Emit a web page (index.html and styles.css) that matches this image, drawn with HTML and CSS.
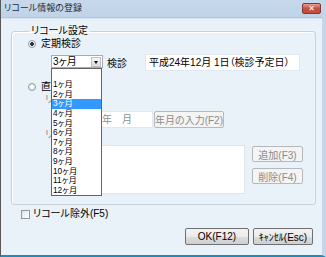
FILE: index.html
```html
<!DOCTYPE html>
<html lang="ja">
<head>
  <meta charset="UTF-8" />
  <title>リコール情報の登録</title>
  <link rel="stylesheet" href="styles.css">
</head>
<body>
  <div class="window">
    <div class="titlebar">
      <span class="title">リコール情報の登録</span>
      <span class="close">✕</span>
    </div>

    <div class="client">
      <fieldset class="group">
        <legend>リコール設定</legend>

        <div class="radio-row">
          <span class="radio checked"></span>
          <span>定期検診</span>
        </div>

        <div class="combo-row">
          <div class="combo">
            <span class="combo-value">3ヶ月</span>
            <span class="combo-btn"></span>
            <ul class="droplist">
              <li class="blank"></li>
              <li>1ヶ月</li>
              <li>2ヶ月</li>
              <li class="selected">3ヶ月</li>
              <li>4ヶ月</li>
              <li>5ヶ月</li>
              <li>6ヶ月</li>
              <li>7ヶ月</li>
              <li>8ヶ月</li>
              <li>9ヶ月</li>
              <li>10ヶ月</li>
              <li>11ヶ月</li>
              <li>12ヶ月</li>
            </ul>
          </div>
          <span class="combo-label">検診</span>
          <div class="textbox date">平成24年12月 1日（検診予定日）</div>
        </div>

        <div class="radio-row second">
          <span class="radio"></span>
          <span>直</span>
        </div>

        <div class="sub-label">リ</div>

        <div class="ym-row">
          <div class="textbox ym">年　月</div>
          <button class="btn" disabled>年月の入力(F2)</button>
        </div>

        <div class="sub-label">リ</div>

        <div class="list-row">
          <div class="listbox"></div>
          <div class="side-buttons">
            <button class="btn" disabled>追加(F3)</button>
            <button class="btn" disabled>削除(F4)</button>
          </div>
        </div>
      </fieldset>

      <div class="check-row">
        <span class="check"></span>
        <span>リコール除外(F5)</span>
      </div>

      <div class="footer">
        <button class="btn main">OK(F12)</button>
        <button class="btn main">ｷｬﾝｾﾙ(Esc)</button>
      </div>
    </div>
  </div>
</body>
</html>
```

FILE: styles.css
```css
* {
  box-sizing: border-box;
}

body {
  margin: 0;
  background: #ffffff;
  font-family: "Liberation Sans", "Noto Sans CJK JP", sans-serif;
  font-size: 10px;
  font-feature-settings: "palt";
  color: #000000;
}

.window {
  width: 326px;
  height: 257px;
  display: flex;
  flex-direction: column;
  background: #c9dbee;
  border-left: 1px solid #585858;
  border-right: 4px solid #c4d6ea;
  border-bottom: 2px solid #1f8bb8;
  box-shadow: inset -1px 0 0 #8fa5bd;
}

.titlebar {
  height: 18px;
  display: flex;
  align-items: center;
  justify-content: space-between;
  padding: 0 0 2px 3px;
  background: linear-gradient(#c7d8ea, #bfd3e8);
  border-bottom: 1px solid #b2c6dc;
}

.title {
  font-size: 9px;
  line-height: 12px;
  color: #1b2a3c;
}

.close {
  width: 19px;
  height: 11px;
  margin-right: 1px;
  margin-top: 1px;
  border: 1px solid #7a3a36;
  border-radius: 2px;
  background: linear-gradient(#e59c8e, #c84a3b 55%, #c0503e);
  color: #ffffff;
  font-size: 8px;
  line-height: 9px;
  text-align: center;
  font-family: "DejaVu Sans", sans-serif;
  font-weight: bold;
}

.client {
  flex: 1;
  background: #e9f1f9;
  padding: 6px 6px 0 10px;
  border-top: 1px solid #d7e3ef;
}

.group {
  width: 305px;
  margin: 0;
  padding: 0 0 10px 16px;
  min-width: 0;
  border: 1px solid #c8d2da;
  border-radius: 3px;
  box-shadow: inset 1px 1px 0 #ffffff;
}

.group legend {
  padding: 0 2px;
  margin-left: 1px;
  line-height: 12px;
}

.radio-row {
  display: flex;
  align-items: center;
  gap: 5px;
  height: 12px;
  margin-top: 1px;
  line-height: 12px;
}

.radio-row.second {
  margin-top: 10px;
}

.radio {
  width: 8px;
  height: 8px;
  border-radius: 50%;
  border: 1px solid #8d98a4;
  background: radial-gradient(#ffffff, #dde3ea);
}

.radio.checked {
  background: radial-gradient(#2b3540 0 1.6px, #ffffff 2.2px);
}

.combo-row {
  display: flex;
  align-items: center;
  height: 17px;
  margin-top: 4px;
}

.combo {
  position: relative;
  width: 52px;
  height: 13px;
  margin-left: 23px;
  margin-top: -2px;
  display: flex;
  align-items: center;
  background: #ffffff;
  border: 1px solid #a5acb5;
}

.combo-value {
  flex: 1;
  padding-left: 1px;
  line-height: 11px;
}

.combo-btn {
  width: 10px;
  height: 10px;
  margin-right: 1px;
  border: 1px solid #b9c0c8;
  background: linear-gradient(#f6f6f6, #dcdcdc);
  position: relative;
}

.combo-btn::after {
  content: "";
  position: absolute;
  left: 2px;
  top: 3px;
  border-left: 2px solid transparent;
  border-right: 2px solid transparent;
  border-top: 3px solid #000000;
}

.droplist {
  position: absolute;
  left: -1px;
  top: 12px;
  width: 51px;
  margin: 0;
  padding: 0;
  list-style: none;
  background: #ffffff;
  border: 1px solid #646464;
  z-index: 5;
}

.droplist li {
  height: 9.6px;
  font-size: 8.3px;
  line-height: 9.6px;
  padding-left: 1px;
}

.droplist li.blank {
  height: 11.3px;
}

.droplist li.selected {
  background: #3399ff;
  color: #ffffff;
}

.combo-label {
  margin-left: 4px;
}

.textbox {
  background: #ffffff;
  border: 1px solid #e1e8ef;
  line-height: 15px;
}

.date {
  width: 155px;
  height: 17px;
  margin-left: 18px;
  padding-left: 3px;
}

.sub-label {
  height: 12px;
  line-height: 12px;
  margin-top: 1px;
  padding-left: 17px;
  color: #8a8f95;
}

.sub-label + .list-row {
  margin-top: 4px;
}

.ym-row {
  display: flex;
  height: 17px;
  margin-top: 5px;
}

.ym {
  width: 93px;
  margin-left: 32px;
  padding-left: 41px;
  color: #8a8f95;
}

.btn {
  font-family: inherit;
  font-size: 10px;
  font-feature-settings: "palt";
  padding: 0;
  border-radius: 2px;
  background: #f4f4f4;
  border: 1px solid #b5b9bd;
  color: #8b8b8b;
}

.ym-row .btn {
  width: 70px;
  height: 17px;
  margin-left: 1px;
}

.list-row {
  display: flex;
  margin-top: 2px;
}

.listbox {
  width: 185px;
  height: 49px;
  margin-left: 32px;
  background: #ffffff;
  border: 1px solid #dde4eb;
}

.side-buttons {
  display: flex;
  flex-direction: column;
  gap: 6px;
  margin-left: 7px;
  padding-top: 1px;
}

.side-buttons .btn {
  width: 51px;
  height: 16px;
}

.check-row {
  display: flex;
  align-items: center;
  gap: 3px;
  height: 12px;
  margin-top: 3px;
  padding-left: 10px;
  line-height: 12px;
}

.check {
  width: 9px;
  height: 9px;
  border: 1px solid #8d98a4;
  background: linear-gradient(135deg, #dfe4ea, #ffffff);
}

.footer {
  display: flex;
  justify-content: flex-end;
  gap: 4px;
  margin-top: 8px;
  padding-right: 3px;
}

.btn.main {
  height: 17px;
  color: #000000;
  border-color: #707070;
  background: linear-gradient(#f2f2f2, #ebebeb 50%, #dddddd 51%, #cfcfcf);
}

.footer .btn:first-child {
  width: 64px;
}

.footer .btn:last-child {
  width: 60px;
}
```
